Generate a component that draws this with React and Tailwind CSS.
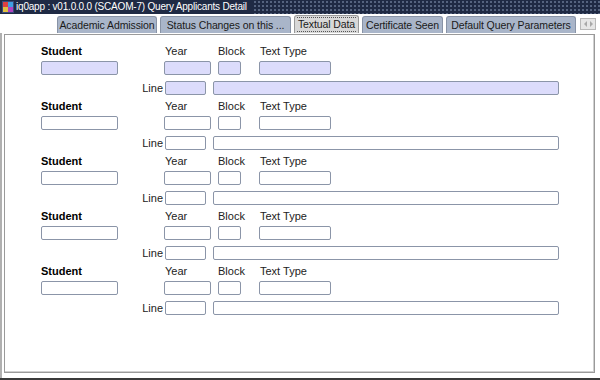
import React from "react";

const Field = ({ w, filled, className = "" }) => (
  <div
    className={`h-[14px] shrink-0 rounded-[2px] border border-[#8b95a8] ${
      filled ? "bg-[#dcdcfb]" : "bg-white"
    } ${w} ${className}`}
  />
);

const Record = ({ filled }) => (
  <div className="flex flex-col pl-[36px]">
    <div className="flex h-[13px] items-center whitespace-nowrap text-[11px] leading-none text-[#222]">
      <span className="w-[123px] font-bold text-black">Student</span>
      <span className="w-[54px] pl-[1px]">Year</span>
      <span className="w-[41px]">Block</span>
      <span className="pl-[1px]">Text Type</span>
    </div>
    <div className="mt-[3px] flex">
      <Field w="w-[77px]" filled={filled} />
      <Field w="w-[47px]" filled={filled} className="ml-[46px]" />
      <Field w="w-[23px]" filled={filled} className="ml-[7px]" />
      <Field w="w-[72px]" filled={filled} className="ml-[18px]" />
    </div>
    <div className="mt-[6px] mb-[5px] flex items-center">
      <span className="w-[124px] pr-[2px] text-right text-[11px] leading-none text-[#222]">
        Line
      </span>
      <Field w="w-[41px]" filled={filled} />
      <Field w="w-[346px]" filled={filled} className="ml-[7px]" />
    </div>
  </div>
);

const tabs = [
  { label: "Academic Admission", w: "w-[100px]" },
  { label: "Status Changes on this ...", w: "w-[131px]" },
  { label: "Textual Data", w: "w-[65px]", active: true },
  { label: "Certificate Seen", w: "w-[81px]" },
  { label: "Default Query Parameters", w: "w-[130px]" },
];

export default function App() {
  return (
    <div
      className="flex h-[380px] w-[600px] flex-col overflow-hidden bg-white"
      style={{ fontFamily: '"Liberation Sans", Arial, sans-serif' }}
    >
      {/* title bar */}
      <div className="flex h-[14px] items-center bg-[#1f2a44]">
        <svg width="12" height="12" viewBox="0 0 12 12" className="ml-[2px] shrink-0">
          <rect x="0" y="0" width="12" height="12" fill="#3a4a7a" />
          <rect x="1" y="1" width="5" height="5" fill="#e04040" />
          <rect x="6" y="1" width="5" height="5" fill="#40a0e0" />
          <rect x="1" y="6" width="5" height="5" fill="#e0c040" />
          <rect x="6" y="6" width="5" height="5" fill="#b040c0" />
        </svg>
        <span className="ml-[2px] whitespace-nowrap text-[10px] leading-none tracking-[-0.2px] text-white">
          iq0app : v01.0.0.0 (SCAOM-7) Query Applicants Detail
        </span>
        <div className="ml-[6px] h-full flex-1 bg-[radial-gradient(circle,#55637f_0.8px,transparent_1px)] bg-[length:4px_4px]" />
      </div>

      {/* tabs */}
      <div className="flex h-[19px] items-end pl-[57px]">
        {tabs.map((t) => (
          <div
            key={t.label}
            className={`mr-[3px] flex shrink-0 items-center justify-center whitespace-nowrap rounded-t-[3px] border border-b-0 text-[10.5px] leading-none tracking-[-0.1px] text-[#1a1a1a] ${
              t.active
                ? "h-[18px] border-[#9a9a9a] bg-[#d8d8d8]"
                : "h-[17px] border-[#8893a6] bg-[#a9b5c9]"
            } ${t.w}`}
          >
            <span
              className={
                t.active
                  ? "border-y border-dotted border-[#555] px-[1px] py-[1px]"
                  : ""
              }
            >
              {t.label}
            </span>
          </div>
        ))}
        {/* tab scroll button */}
        <div className="mb-[3px] ml-[1px] flex h-[12px] w-[16px] shrink-0 items-center justify-center border border-[#b8b8b8] bg-[#e6e6e6]">
          <svg width="9" height="6" viewBox="0 0 9 6">
            <path d="M3 0 L0 3 L3 6 Z" fill="#a8a8a8" />
            <path d="M6 0 L9 3 L6 6 Z" fill="#a8a8a8" />
          </svg>
        </div>
      </div>

      {/* panel */}
      <div className="flex flex-1 border-l-2 border-[#b0b0b0] pb-[3px]">
        <div className="mt-[1px] ml-[2px] mr-[5px] mb-[2px] flex flex-1 flex-col border border-[#9a9a9a] pt-[10px] shadow-[inset_-1px_-1px_0_#d0d0d0]">
          <Record filled />
          <Record />
          <Record />
          <Record />
          <Record />
        </div>
      </div>
      <div className="h-[2px] bg-[#3a3a3a]" />
    </div>
  );
}
